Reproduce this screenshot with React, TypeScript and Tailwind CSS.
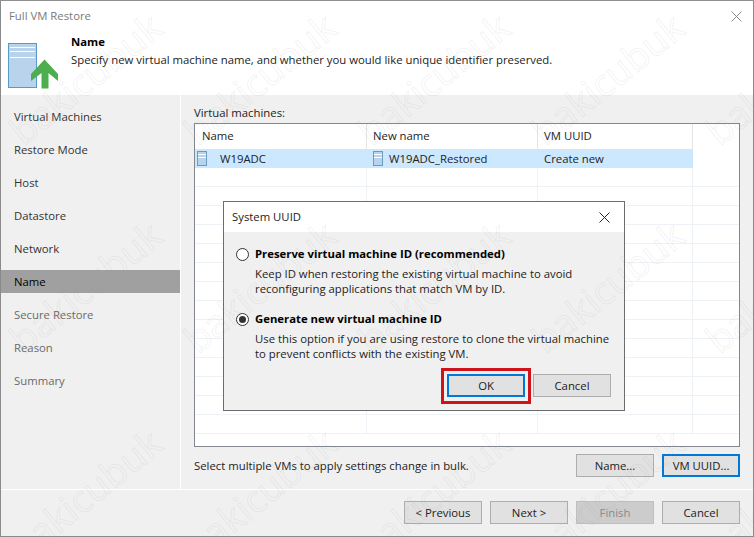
const SIDEBAR = [
  { label: 'Virtual Machines', tone: 'text-[#333333]' },
  { label: 'Restore Mode', tone: 'text-[#333333]' },
  { label: 'Host', tone: 'text-[#333333]' },
  { label: 'Datastore', tone: 'text-[#333333]' },
  { label: 'Network', tone: 'text-[#333333]' },
  { label: 'Name', tone: 'bg-[#a0a0a0] text-black' },
  { label: 'Secure Restore', tone: 'text-[#6a6a6a]' },
  { label: 'Reason', tone: 'text-[#6a6a6a]' },
  { label: 'Summary', tone: 'text-[#6a6a6a]' },
]

const EMPTY_ROWS = Array.from({ length: 14 })
const MARKS = Array.from({ length: 20 })

function HeaderIcon() {
  return (
    <svg width="56" height="48" viewBox="0 0 56 48" className="shrink-0">
      <rect x="0.5" y="0.5" width="28" height="44" fill="#b9d3ec" stroke="#5a9bc4" />
      <path d="M2 4.5h25M2 8.5h25M2 14.5h25" stroke="#ffffff" strokeWidth="1" />
      <path d="M36.5 16.5L50 31V38L40.5 30V45.5H33.5V30L23 38V31Z" fill="#4cae4f" />
    </svg>
  )
}

function VmIcon() {
  return (
    <svg width="10" height="15" viewBox="0 0 10 15" className="shrink-0">
      <rect x="0.5" y="0.5" width="9" height="14" fill="#b9d3ec" stroke="#6a9cbf" />
      <path d="M1 3.5h8M1 6.5h8" stroke="#ffffff" />
    </svg>
  )
}

function Btn({ label, focused, disabled, className = '' }: { label: string; focused?: boolean; disabled?: boolean; className?: string }) {
  return (
    <div
      className={`w-[78px] h-[23px] flex items-center justify-center ${
        focused ? 'bg-[#e1e1e1] border-2 border-[#0078d7]' : disabled ? 'border border-[#bfbfbf] bg-[#cccccc] text-[#8a8a8a]' : 'bg-[#e1e1e1] border border-[#adadad]'
      } ${className}`}
    >
      {label}
    </div>
  )
}

function Radio({ checked }: { checked?: boolean }) {
  return (
    <div className="w-[13px] h-[13px] rounded-full border border-[#333333] bg-white flex items-center justify-center shrink-0">
      {checked && <div className="w-[7px] h-[7px] rounded-full bg-[#333333]" />}
    </div>
  )
}

function CloseX({ stroke }: { stroke: string }) {
  return (
    <svg width="11" height="11" viewBox="0 0 11 11">
      <path d="M0.5 0.5l10 10M10.5 0.5l-10 10" stroke={stroke} fill="none" />
    </svg>
  )
}

export default function App() {
  return (
    <div className="relative w-[754px] h-[537px] overflow-hidden bg-[#f0f0f0] text-[11.33px] leading-[16px] text-[#222222] font-['Open_Sans','Noto_Sans',sans-serif]">
      <div className="h-px bg-[#8f8f8f]" />
      <div className="flex flex-col h-[536px] border-x border-b border-[#8a8a8a]">
        {/* Header */}
        <div className="bg-white h-[94px] shrink-0 flex flex-col">
          <div className="h-[30px] flex items-center justify-between pl-[8px] pr-[11px] text-[#7a7a7a]">
            <span>Full VM Restore</span>
            <CloseX stroke="#8a8a8a" />
          </div>
          <div className="flex pl-[7px]">
            <div className="pt-[12px] w-[63px]"><HeaderIcon /></div>
            <div className="pt-[3px]">
              <div className="font-bold text-black">Name</div>
              <div className="mt-[2px]">Specify new virtual machine name, and whether you would like unique identifier preserved.</div>
            </div>
          </div>
        </div>

        {/* Body */}
        <div className="flex flex-1 min-h-0">
          <div className="w-[179px] shrink-0 pt-[10px] flex flex-col gap-[10px]">
            {SIDEBAR.map(item => (
              <div key={item.label} className={`h-[23px] pl-[13px] flex items-center ${item.tone}`}>
                {item.label}
              </div>
            ))}
          </div>
          <div className="flex-1 border-l border-white pl-[13px] pr-[13px] pt-[10px] flex flex-col">
            <div className="h-[18px]">Virtual machines:</div>
            <div className="h-[324px] border border-[#828790] bg-white overflow-hidden">
              <div className="flex h-[25px] items-end">
                <div className="w-[172px] pl-[7px] pb-[5px] border-r border-[#e5e5e5] h-full flex items-end">Name</div>
                <div className="w-[171px] pl-[6px] pb-[5px] border-r border-[#e5e5e5] h-full flex items-end">New name</div>
                <div className="w-[155px] pl-[6px] pb-[5px] border-r border-[#e5e5e5] h-full flex items-end">VM UUID</div>
              </div>
              <div className="flex h-[19px] w-[498px] bg-[#cce8ff] items-center">
                <div className="w-[172px] pl-[2px] flex items-center gap-[13px]"><VmIcon />W19ADC</div>
                <div className="w-[171px] pl-[6px] flex items-center gap-[6px]"><VmIcon />W19ADC_Restored</div>
                <div className="w-[155px] pl-[6px]">Create new</div>
              </div>
              {EMPTY_ROWS.map((_, i) => (
                <div key={i} className="flex h-[19px] border-b border-[#eef1f5]">
                  <div className="w-[172px] border-r border-[#eef1f5]" />
                  <div className="w-[171px] border-r border-[#eef1f5]" />
                  <div className="w-[155px] border-r border-[#eef1f5]" />
                </div>
              ))}
            </div>
            <div className="mt-[7px] flex items-center justify-between">
              <span>Select multiple VMs to apply settings change in bulk.</span>
              <div className="flex gap-[8px]">
                <Btn label="Name..." />
                <Btn label="VM UUID..." focused />
              </div>
            </div>
          </div>
        </div>

        {/* Footer */}
        <div className="h-[47px] shrink-0 border-t border-white flex justify-end gap-[8px] pt-[11px] pr-[13px]">
          <Btn label="< Previous" />
          <Btn label="Next >" />
          <Btn label="Finish" disabled />
          <Btn label="Cancel" />
        </div>
      </div>

      {/* System UUID dialog */}
      <div className="absolute left-[223px] top-[201px] w-[402px] h-[210px] border border-[#6d6d6d] bg-[#f0f0f0] flex flex-col">
        <div className="h-[30px] bg-white shrink-0 flex items-center justify-between pl-[8px] pr-[14px]">
          <span>System UUID</span>
          <CloseX stroke="#222222" />
        </div>
        <div className="pl-[12px] pt-[14px]">
          <div className="flex items-center gap-[6px] h-[16px]">
            <Radio />
            <span className="font-bold text-black">Preserve virtual machine ID (recommended)</span>
          </div>
          <div className="pl-[19px] mt-[4px] leading-[15px]">
            Keep ID when restoring the existing virtual machine to avoid<br />
            reconfiguring applications that match VM by ID.
          </div>
          <div className="flex items-center gap-[6px] h-[16px] mt-[15px]">
            <Radio checked />
            <span className="font-bold text-black">Generate new virtual machine ID</span>
          </div>
          <div className="pl-[19px] mt-[4px] leading-[15px]">
            Use this option if you are using restore to clone the virtual machine<br />
            to prevent conflicts with the existing VM.
          </div>
        </div>
        <div className="absolute right-[13px] bottom-[13px] flex gap-[8px]">
          <Btn label="OK" focused />
          <Btn label="Cancel" />
        </div>
        <div className="absolute left-[217px] top-[166px] w-[90px] h-[36px] border-[3px] border-[#d0121b]" />
      </div>

      {/* Watermark */}
      <div aria-hidden className="absolute left-[-2px] top-[-26px] w-[870px] h-[832px] grid grid-cols-[repeat(5,174px)] auto-rows-[208px] pointer-events-none">
        {MARKS.map((_, i) => (
          <div key={i} className="flex items-center justify-center">
            <span className="-rotate-[39deg] text-[38px] leading-none text-transparent [-webkit-text-stroke:1px_rgba(150,150,150,0.12)] font-['Open_Sans',sans-serif]">
              bakicubuk
            </span>
          </div>
        ))}
      </div>
    </div>
  )
}
